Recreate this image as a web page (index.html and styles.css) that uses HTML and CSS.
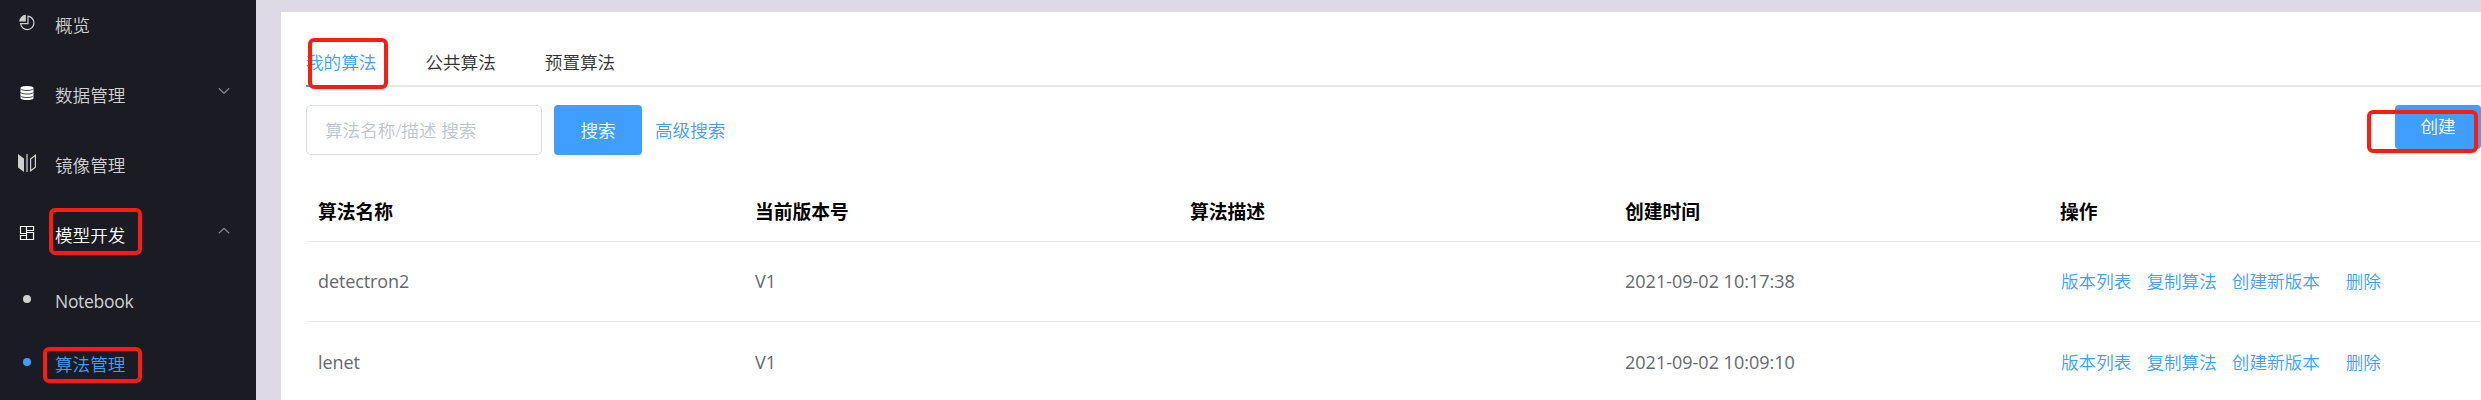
FILE: index.html
```html
<!DOCTYPE html>
<html lang="zh-CN">
<head>
<meta charset="utf-8">
<title>算法管理</title>
<link rel="stylesheet" href="styles.css">
</head>
<body>
<div class="app">
  <nav class="sidebar">
    <a class="item">
      <svg class="icon" viewBox="0 0 18 18"><path d="M10 2.200A6.700 6.700 0 1 1 2.600 9.600H10Z" fill="none" stroke="#cfcfcf" stroke-width="1.200"/><path d="M7.800 .8V7.600H1.200A7 7 0 0 1 7.800 .8Z" fill="#cfcfcf"/></svg>
      <span class="label">概览</span>
    </a>
    <a class="item">
      <svg class="icon" viewBox="0 0 18 18"><path d="M2.500 4C2.500 1.300 15.500 1.300 15.500 4V14C15.500 16.700 2.500 16.700 2.500 14Z" fill="#fff"/><path d="M2.500 5C4.500 7 13.500 7 15.500 5M2.500 8.500C4.500 10.500 13.500 10.500 15.500 8.500M2.500 12C4.500 14 13.500 14 15.500 12" fill="none" stroke="#3f4a5c" stroke-width="1"/></svg>
      <span class="label">数据管理</span>
      <svg class="chevron" viewBox="0 0 12 8"><path d="M.8 1.300 6 6.300 11.200 1.300"/></svg>
    </a>
    <a class="item">
      <svg class="icon" viewBox="0 0 18 18"><path d="M0 0 6 4.500V18L0 13.500Z" fill="#cfcfcf"/><path d="M9 0V18" stroke="#a5a5a8" stroke-width="1.600"/><path d="M12.600 4.900 17.400 1.300V13.300L12.600 16.800Z" fill="none" stroke="#cfcfcf" stroke-width="1.200"/></svg>
      <span class="label">镜像管理</span>
    </a>
    <a class="item item-open">
      <svg class="icon" viewBox="0 0 18 18"><path d="M2.500 2.500H8.500V9.500H2.500ZM8.500 2.500H15.500V6.500H8.500ZM8.500 8.500H15.500V15.500H8.500ZM2.500 11.500H8.500V15.500H2.500Z" fill="none" stroke="#fff" stroke-width="1.200"/></svg>
      <span class="label">模型开发</span>
      <svg class="chevron" viewBox="0 0 12 8"><path d="M.8 6.300 6 1.300 11.200 6.300"/></svg>
    </a>
    <a class="item sub"><i class="dot"></i><span class="label latin">Notebook</span></a>
    <a class="item sub item-active"><i class="dot"></i><span class="label">算法管理</span></a>
  </nav>
  <main class="main">
    <section class="panel">
      <div class="tabs">
        <a class="tab tab-active">我的算法</a>
        <a class="tab">公共算法</a>
        <a class="tab">预置算法</a>
      </div>
      <div class="toolbar">
        <div class="input">算法名称/描述 搜索</div>
        <button class="btn">搜索</button>
        <a class="link">高级搜索</a>
        <button class="btn create">创建</button>
      </div>
      <div class="table">
        <div class="row head"><span>算法名称</span><span>当前版本号</span><span>算法描述</span><span>创建时间</span><span>操作</span></div>
        <div class="row"><span class="name">detectron2</span><span>V1</span><span></span><span>2021-09-02 10:17:38</span><span class="ops"><a>版本列表</a><a>复制算法</a><a>创建新版本</a><a class="del">删除</a></span></div>
        <div class="row"><span class="name">lenet</span><span>V1</span><span></span><span>2021-09-02 10:09:10</span><span class="ops"><a>版本列表</a><a>复制算法</a><a>创建新版本</a><a class="del">删除</a></span></div>
      </div>
    </section>
  </main>
  <i class="mark mark-group"></i>
  <i class="mark mark-menu"></i>
  <i class="mark mark-tab"></i>
  <i class="mark mark-create"></i>
</div>
</body>
</html>
```

FILE: styles.css
```css
* { box-sizing: border-box; }
body { margin: 0; font-family: "Open Sans", "Noto Sans CJK SC", sans-serif; font-size: 17.6px; font-weight: 350; line-height: 24px; }
.app { position: relative; display: flex; width: 2481px; height: 400px; overflow: hidden; background: #dddae5; }

.sidebar { width: 256px; height: 400px; flex: none; background: #1b1b23; color: #d0d0d2; overflow: hidden; }
.item { display: flex; align-items: center; height: 70px; padding: 0 26px 0 18px; }
.item:first-child { height: 61px; padding-bottom: 9px; }
.icon { width: 18px; height: 18px; margin-bottom: 6px; flex: none; }
.label { margin: 0 0 3px 19px; white-space: nowrap; }
.latin { font-size: 17.5px; font-weight: 400; letter-spacing: -.3px; }
.chevron { width: 12px; height: 8px; margin: 0 0 10px auto; }
.chevron path { fill: none; stroke: #85858a; stroke-width: 1.2; }
.item-open { color: #fff; }
.sub { height: 63px; }
.dot { width: 8px; height: 8px; margin: 0 5px 7px; border-radius: 50%; background: currentColor; }
.item-active { color: #409eff; }

.main { flex: 1; padding: 12px 0 0 25px; }
.panel { height: 388px; padding: 23px 0 0 25px; background: #fff; }
.tabs { display: flex; gap: 50px; height: 52px; border-bottom: 2px solid #e4e7ed; color: #303133; }
.tab { height: 52px; padding-top: 15px; white-space: nowrap; }
.tab:not(.tab-active) { text-indent: -1px; }
.tab-active { color: #409eff; border-bottom: 2px solid #409eff; }
.toolbar { display: flex; height: 50px; margin-top: 18px; }
.input { width: 236px; height: 50px; padding: 12px 18px; border: 1px solid #dcdfe6; border-radius: 5px; color: #c0c4cc; white-space: nowrap; }
.btn { width: 88px; height: 50px; margin: 0 0 0 12px; padding: 0 0 1px; border: 0; border-radius: 4px; background: #409eff; color: #fff; font: inherit; }
.link { margin-left: 13px; padding-top: 13px; color: #409eff; }
.create { width: 86px; height: 44px; margin-left: auto; padding: 0 0 2px 0; }

.table { margin-top: 19px; font-size: 18px; font-weight: 400; color: #66686c; }
.row { display: grid; grid-template-columns: 437px 435px 435px 435px 1fr; align-items: center; height: 80px; padding: 0 0 2px 12px; border-bottom: 1px solid #ebebed; }
.row:last-child { height: 81px; padding-bottom: 0; }
.head { height: 68px; padding: 8px 0 0 12px; font-size: 18.75px; font-weight: 700; color: #000; }
.name { letter-spacing: -.1px; }
.ops { display: flex; gap: 15px; padding-left: 1px; font-size: 17.6px; font-weight: 350; color: #409eff; white-space: nowrap; }
.del { margin-left: 11px; }

.mark { position: absolute; border: 4px solid #fc1d10; border-radius: 6px; }
.mark-group { left: 49px; top: 208px; width: 93px; height: 47px; }
.mark-menu { left: 43px; top: 347px; width: 99px; height: 36px; }
.mark-tab { left: 308px; top: 38px; width: 80px; height: 51px; }
.mark-create { left: 2367px; top: 110px; width: 111px; height: 43px; }
```
